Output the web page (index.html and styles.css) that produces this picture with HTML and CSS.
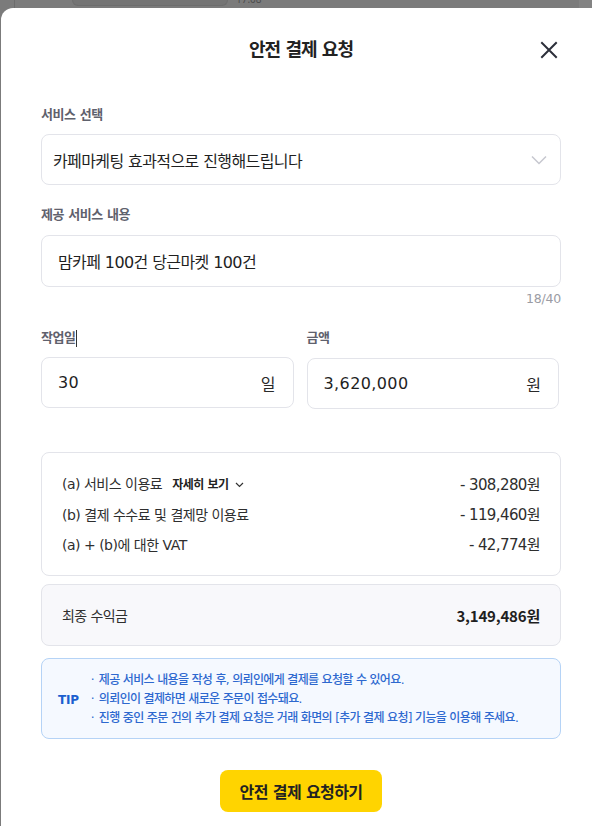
FILE: index.html
```
<!DOCTYPE html>
<html lang="ko">
<head>
<meta charset="utf-8">
<title>안전 결제 요청</title>
<link rel="stylesheet" href="styles.css">
</head>
<body>
<div class="backdrop">
  <div class="peek">
    <div class="peek-line"></div>
    <div class="peek-bubble"></div>
    <span class="peek-time">17:08</span>
    <div class="peek-fill"></div>
    <div class="peek-scroll"></div>
  </div>
  <div class="modal">
    <header class="modal-head">
      <span></span>
      <h1 class="modal-title">안전 결제 요청</h1>
      <button class="close" type="button" aria-label="닫기">
        <svg width="24" height="24" viewBox="0 0 24 24"><path d="M5 5 L19 19 M19 5 L5 19" stroke="#2c2f3a" stroke-width="2" fill="none" stroke-linecap="square"/></svg>
      </button>
    </header>

    <div class="field">
      <div class="label">서비스 선택</div>
      <div class="box select">
        <span class="value">카페마케팅 효과적으로 진행해드립니다</span>
        <svg width="16" height="10" viewBox="0 0 16 10"><polyline points="1,1.5 8,8.5 15,1.5" fill="none" stroke="#c6c7cf" stroke-width="1.5"/></svg>
      </div>
    </div>

    <div class="field field-gap">
      <div class="label">제공 서비스 내용</div>
      <div class="box text-input">
        <span class="value">맘카페 100건 당근마켓 100건</span>
      </div>
      <div class="counter">18/40</div>
    </div>

    <div class="pair">
      <div class="field">
        <div class="label">작업일<span class="caret"></span></div>
        <div class="box unit-input">
          <span class="value num">30</span>
          <span class="unit">일</span>
        </div>
      </div>
      <div class="field">
        <div class="label">금액</div>
        <div class="box unit-input">
          <span class="value num">3,620,000</span>
          <span class="unit">원</span>
        </div>
      </div>
    </div>

    <div class="fees">
      <div class="fee-row">
        <span class="fee-name">(a) 서비스 이용료 <span class="more">자세히 보기<svg width="9" height="6" viewBox="0 0 9 6"><polyline points="1,1 4.5,4.5 8,1" fill="none" stroke="#333" stroke-width="1.2"/></svg></span></span>
        <span class="fee-val">- 308,280원</span>
      </div>
      <div class="fee-row">
        <span class="fee-name">(b) 결제 수수료 및 결제망 이용료</span>
        <span class="fee-val">- 119,460원</span>
      </div>
      <div class="fee-row">
        <span class="fee-name">(a) + (b)에 대한 VAT</span>
        <span class="fee-val">- 42,774원</span>
      </div>
    </div>

    <div class="total">
      <span class="total-name">최종 수익금</span>
      <span class="total-val">3,149,486원</span>
    </div>

    <div class="tip">
      <span class="tip-tag">TIP</span>
      <ul class="tip-list">
        <li>제공 서비스 내용을 작성 후, 의뢰인에게 결제를 요청할 수 있어요.</li>
        <li>의뢰인이 결제하면 새로운 주문이 접수돼요.</li>
        <li>진행 중인 주문 건의 추가 결제 요청은 거래 화면의 [추가 결제 요청] 기능을 이용해 주세요.</li>
      </ul>
    </div>

    <div class="actions">
      <button class="submit" type="button">안전 결제 요청하기</button>
    </div>
  </div>
</div>
</body>
</html>
```

FILE: styles.css
```
* { box-sizing: border-box; }
html, body {
  margin: 0;
  padding: 0;
  width: 592px;
  height: 826px;
  overflow: hidden;
  background: #7b7b7b;
  font-family: "DejaVu Sans", "Noto Sans CJK KR", sans-serif;
  color: #222;
}
.backdrop {
  width: 592px;
  height: 826px;
  display: flex;
  flex-direction: column;
  background: #7b7b7b;
}
.peek {
  height: 8px;
  display: flex;
  align-items: flex-start;
  flex-shrink: 0;
}
.peek-line {
  width: 1px;
  height: 8px;
  margin-left: 14px;
  background: #6c6c6c;
}
.peek-bubble {
  width: 156px;
  height: 6px;
  margin-left: 57px;
  background: #747474;
  border: 1px solid #6d6d6d;
  border-top: none;
  border-radius: 0 0 6px 6px;
}
.peek-time {
  margin-left: 8px;
  margin-top: -6px;
  font-size: 10px;
  line-height: 10px;
  color: #4d4d4d;
  font-family: "Noto Sans", sans-serif;
}
.peek-fill { flex: 1; }
.peek-scroll {
  width: 13px;
  height: 8px;
  background: #838383;
}
.modal {
  width: 620px;
  margin-left: 1px;
  flex: 1;
  background: #fff;
  border-radius: 12px 12px 0 0;
  padding: 0 0 0 40px;
  display: flex;
  flex-direction: column;
  align-items: flex-start;
}
.modal > * { width: 520px; }
.modal-head {
  display: grid;
  grid-template-columns: 1fr auto 1fr;
  align-items: center;
  padding-top: 30px;
  height: 54px;
  margin-bottom: 43px;
}
.modal-title {
  margin: 0;
  font-size: 18px;
  line-height: 24px;
  font-weight: 700;
  letter-spacing: -1px;
  color: #222;
}
.close {
  justify-self: end;
  width: 24px;
  height: 24px;
  padding: 0;
  border: 0;
  background: none;
  display: flex;
}
.field { display: flex; flex-direction: column; }
.field-gap { margin-top: 20px; }
.label {
  font-size: 13px;
  line-height: 20px;
  font-weight: 700;
  color: #5f616d;
  letter-spacing: -0.4px;
  margin-bottom: 10px;
  display: flex;
  align-items: center;
}
.field:first-of-type .label { margin-bottom: 9px; }
.caret {
  display: inline-block;
  width: 1px;
  height: 17px;
  background: #333;
}
.box {
  height: 51px;
  border: 1px solid #e3e4ea;
  border-radius: 8px;
  display: flex;
  align-items: center;
  background: #fff;
}
.value {
  font-size: 16px;
  letter-spacing: -0.6px;
  color: #1f1f1f;
}
.value.num { letter-spacing: 0.4px; }
.select {
  padding: 0 13px 0 11px;
  justify-content: space-between;
}
.text-input {
  height: 52px;
  padding: 0 16px;
}
.counter {
  margin-top: 4px;
  font-size: 12.5px;
  line-height: 16px;
  text-align: right;
  color: #9b9ca4;
  letter-spacing: -0.2px;
}
.pair {
  margin-top: 21px;
  width: 518px;
  display: grid;
  grid-template-columns: 1fr 1fr;
  gap: 13px;
}
.unit-input {
  padding: 0 17px 0 16px;
  justify-content: space-between;
}
.unit {
  font-size: 16px;
  color: #2a2a2a;
}
.fees {
  margin-top: 43px;
  border: 1px solid #e3e4ea;
  border-radius: 8px;
  padding: 21px 20px 20px 20px;
  display: flex;
  flex-direction: column;
  gap: 10px;
}
.fee-row {
  display: flex;
  justify-content: space-between;
  align-items: center;
  line-height: 20px;
  color: #2e2e2e;
}
.fee-name {
  font-size: 14px;
  letter-spacing: -0.5px;
}
.fee-val {
  font-size: 15px;
  letter-spacing: -0.6px;
}
.more {
  margin-left: 6px;
  font-size: 12px;
  font-weight: 700;
  letter-spacing: -0.5px;
  color: #222;
  display: inline-flex;
  align-items: center;
  gap: 6px;
}
.total {
  margin-top: 8px;
  height: 62px;
  border: 1px solid #e3e4ea;
  border-radius: 8px;
  background: #f8f8fb;
  padding: 0 20px;
  display: flex;
  justify-content: space-between;
  align-items: center;
}
.total-name {
  font-size: 14px;
  letter-spacing: -0.6px;
  color: #2e2e2e;
}
.total-val {
  font-family: "Noto Sans CJK KR", sans-serif;
  font-size: 15px;
  font-weight: 700;
  letter-spacing: -0.2px;
  color: #1f1f1f;
}
.tip {
  margin-top: 12px;
  border: 1px solid #b5d3f6;
  background: #f5f9ff;
  border-radius: 8px;
  padding: 12px 16px 10px;
  display: flex;
  align-items: center;
  gap: 12px;
}
.tip-tag {
  font-size: 12px;
  font-weight: 700;
  color: #1b5fcf;
  letter-spacing: -0.2px;
}
.tip-list {
  list-style: none;
  margin: 0;
  padding: 0;
  font-size: 12px;
  font-weight: 500;
  line-height: 19px;
  letter-spacing: -0.65px;
  color: #2d68cf;
}
.tip-list li::before {
  content: "·";
  display: inline-block;
  width: 8px;
}
.actions {
  margin-top: 31px;
  display: flex;
  justify-content: center;
}
.submit {
  height: 42px;
  padding: 0 20px;
  border: 0;
  border-radius: 8px;
  background: #ffd400;
  font-family: "DejaVu Sans", "Noto Sans CJK KR", sans-serif;
  font-size: 16px;
  font-weight: 700;
  letter-spacing: -0.6px;
  color: #222;
}
```
